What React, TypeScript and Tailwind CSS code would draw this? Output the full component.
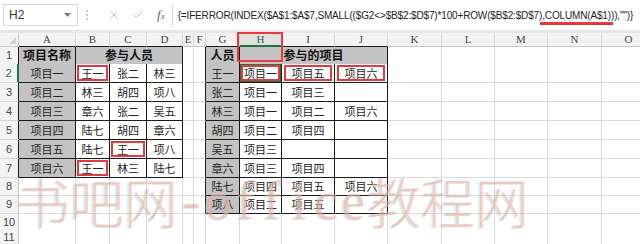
import { X, Check } from 'lucide-react'

const letters = ['A', 'B', 'C', 'D', 'E', 'F', 'G', 'H', 'I', 'J', 'K', 'L', 'M', 'N', 'O']
const gridCols =
  'grid grid-cols-[19px_57px_34px_37px_36px_11px_12px_34px_42px_53px_53px_54px_53px_53px_54px_54px]'

const table1 = [
  ['项目一', '王一', '张二', '林三'],
  ['项目二', '林三', '胡四', '项八'],
  ['项目三', '章六', '张二', '吴五'],
  ['项目四', '陆七', '胡四', '章六'],
  ['项目五', '陆七', '王一', '项八'],
  ['项目六', '王一', '林三', '陆七'],
]

const table2 = [
  ['王一', '项目一', '项目五', '项目六'],
  ['张二', '项目一', '项目三', ''],
  ['林三', '项目一', '项目二', '项目六'],
  ['胡四', '项目二', '项目四', ''],
  ['吴五', '项目三', '', ''],
  ['章六', '项目三', '项目四', ''],
  ['陆七', '项目四', '项目五', '项目六'],
  ['项八', '项目二', '项目五', ''],
]

const redCells = ['B2', 'C6', 'B7', 'H2', 'I2', 'J2']

const rowHeights = [
  'h-[17px]',
  'h-[19px]',
  'h-[19px]',
  'h-[19px]',
  'h-[19px]',
  'h-[19px]',
  'h-[19px]',
  'h-[18px]',
  'h-[18px]',
  'h-[15px]',
  'h-[15px]',
]

type Cell = {
  t?: string
  gray?: boolean
  bold?: boolean
  span?: number
  tb?: boolean
  edge?: boolean
  name?: string
}

function buildRow(r: number): Cell[] {
  const cells: Cell[] = []
  if (r === 1) {
    cells.push({ t: '项目名称', gray: true, bold: true, tb: true })
    cells.push({ t: '参与人员', gray: true, bold: true, tb: true, span: 3 })
    cells.push({})
    cells.push({ edge: true })
    cells.push({ t: '人员', gray: true, bold: true, tb: true })
    cells.push({ t: '参与的项目', gray: true, bold: true, tb: true, span: 3 })
  } else {
    const a = r <= 7 ? table1[r - 2] : null
    for (let c = 0; c < 4; c++) {
      cells.push(a ? { t: a[c], gray: c === 0, tb: true, name: letters[c] + r } : {})
    }
    cells.push({})
    cells.push({ edge: r <= 9 })
    const g = r <= 9 ? table2[r - 2] : null
    for (let c = 0; c < 4; c++) {
      cells.push(g ? { t: g[c], gray: c === 0, tb: true, name: letters[c + 6] + r } : {})
    }
  }
  for (let c = 0; c < 5; c++) cells.push({})
  return cells
}

function SheetCell({ cell }: { cell: Cell }) {
  const red = cell.name && redCells.includes(cell.name)
  const inset = cell.name === 'I2' || cell.name === 'J2' ? 'inset-x-[2px] inset-y-[1px]' : 'inset-[1px]'
  return (
    <div
      className={[
        'relative flex items-center justify-center overflow-hidden whitespace-nowrap border-b border-r',
        cell.span === 3 ? 'col-span-3' : '',
        cell.tb ? 'border-[#1a1a1a]' : 'border-[#dadada]',
        cell.edge ? 'border-r-[#1a1a1a]' : '',
        cell.gray ? 'bg-[#c3c3c3]' : 'bg-white',
        cell.bold ? 'text-[12px] font-bold text-[#111]' : 'text-[11px] text-[#222]',
      ].join(' ')}
    >
      {cell.t}
      {cell.name === 'H2' && <div className="absolute inset-0 border-2 border-[#217346]" />}
      {red && <div className={`absolute ${inset} border-2 border-[#e23a3f]`} />}
    </div>
  )
}

function FormulaBar() {
  return (
    <div className="flex h-[30px] items-center bg-white font-['Liberation_Sans',sans-serif]">
      <div className="ml-[3px] flex h-[22px] w-[75px] items-center justify-between border border-[#d6d6d6] pl-[5px] pr-[6px] text-[12px] text-[#333]">
        <span>H2</span>
        <svg width="7" height="4" viewBox="0 0 7 4">
          <path d="M0 0h7L3.5 4z" fill="#777" />
        </svg>
      </div>
      <div className="ml-[8px] flex flex-col gap-[2px]">
        <span className="h-[2px] w-[2px] bg-[#c4c4c4]" />
        <span className="h-[2px] w-[2px] bg-[#c4c4c4]" />
        <span className="h-[2px] w-[2px] bg-[#c4c4c4]" />
      </div>
      <X className="ml-[20px] text-[#a8a8a8]" size={12} strokeWidth={1.5} />
      <Check className="ml-[12px] text-[#a8a8a8]" size={12} strokeWidth={1.5} />
      <span className="ml-[13px] font-['Liberation_Serif',serif] text-[13px] italic text-[#666]">
        f<span className="text-[9px]">x</span>
      </span>
      <div className="relative ml-[7px] flex h-[22px] flex-1 items-center border-l border-[#d6d6d6] pl-[5px] text-[10px] tracking-[-0.15px] text-[#222]">
        {'{=IFERROR(INDEX($A$1:$A$7,SMALL(($G2<>$B$2:$D$7)*100+ROW($B$2:$D$7),COLUMN(A$1))),"")}'}
        <div className="absolute left-[367px] top-[18px] h-[3px] w-[73px] bg-[#e23a3f]" />
      </div>
    </div>
  )
}

export default function App() {
  const rows = Array.from({ length: 11 }, (_, i) => i + 1)
  return (
    <div className="relative h-[244px] w-[640px] overflow-hidden bg-white">
      <FormulaBar />
      <div className="h-[3px] bg-[#e6e6e6]" />
      <div className="relative w-[656px] font-['Noto_Sans_CJK_SC','Liberation_Sans',sans-serif]">
        <div className={`${gridCols} h-[14px]`}>
          <div className="relative border-b border-r border-[#c8c8c8] bg-[#f3f3f3]">
            <svg className="absolute bottom-[2px] right-[2px]" width="7" height="7" viewBox="0 0 7 7">
              <path d="M7 0v7H0z" fill="#cfcfcf" />
            </svg>
          </div>
          {letters.map((l, i) => {
            const inTable = i <= 3 || (i >= 6 && i <= 9)
            const sel = l === 'H'
            return (
              <div
                key={l}
                className={[
                  'flex items-center justify-center border-r font-[\'Liberation_Serif\',serif] text-[11px] leading-none',
                  sel ? 'border-b-2 border-b-[#217346] bg-[#e1e1e1] text-[#217346]' : 'border-b bg-[#f3f3f3] text-[#444]',
                  inTable && !sel ? 'border-b-[#1a1a1a]' : '',
                  'border-r-[#d6d6d6]',
                  !inTable && !sel ? 'border-b-[#c8c8c8]' : '',
                ].join(' ')}
              >
                {l}
              </div>
            )
          })}
        </div>
        {rows.map((r) => (
          <div key={r} className={`${gridCols} ${rowHeights[r - 1]}`}>
            <div
              className={[
                'flex items-center justify-center border-b border-b-[#d6d6d6] bg-[#f3f3f3] font-[\'Liberation_Sans\',sans-serif] text-[11px]',
                r === 2 ? 'border-r-2 border-r-[#217346] text-[#217346]' : 'border-r text-[#444]',
                r !== 2 && r <= 7 ? 'border-r-[#1a1a1a]' : '',
                r > 7 ? 'border-r-[#c8c8c8]' : '',
              ].join(' ')}
            >
              {r}
            </div>
            {buildRow(r).map((cell, i) => (
              <SheetCell key={i} cell={cell} />
            ))}
          </div>
        ))}
        <div className="absolute left-[237px] top-[-1px] h-[30px] w-[46px] border-2 border-[#e23a3f]" />
      </div>
      {/* watermark */}
      <div className="pointer-events-none absolute left-[16px] top-[174px] flex whitespace-nowrap text-[54px] font-extralight leading-none text-[#f2a8a8]/55 [text-shadow:-2px_1px_0_rgba(150,210,170,0.35)]">
        <span className="font-['Noto_Sans_CJK_SC',sans-serif]">书吧网</span>
        {'-office'.split('').map((ch, i) => (
          <span key={i} className="inline-block w-[27px] text-center font-['Liberation_Serif',serif] font-normal">
            {ch}
          </span>
        ))}
        <span className="font-['Noto_Sans_CJK_SC',sans-serif]">教程网</span>
      </div>
    </div>
  )
}
